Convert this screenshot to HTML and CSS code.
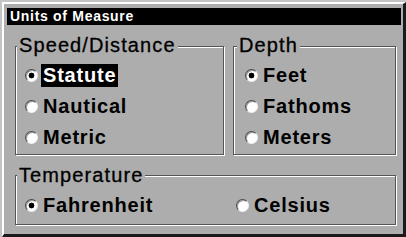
FILE: index.html
```html
<!DOCTYPE html>
<html lang="en">
<head>
    <meta charset="UTF-8">
    <title>Units of Measure</title>
    <link rel="stylesheet" href="styles.css">
</head>
<body>
    <div class="frame">
        <div class="title-bar">Units of Measure</div>

        <div class="groups">
            <div class="group speed">
                <span class="group-title">Speed/Distance</span>
                <div class="option"><span class="radio checked"></span><span class="label selected">Statute</span></div>
                <div class="option"><span class="radio"></span><span class="label">Nautical</span></div>
                <div class="option"><span class="radio"></span><span class="label">Metric</span></div>
            </div>

            <div class="group depth">
                <span class="group-title">Depth</span>
                <div class="option"><span class="radio checked"></span><span class="label">Feet</span></div>
                <div class="option"><span class="radio"></span><span class="label">Fathoms</span></div>
                <div class="option"><span class="radio"></span><span class="label">Meters</span></div>
            </div>
        </div>

        <div class="group temperature">
            <span class="group-title">Temperature</span>
            <div class="option-row">
                <div class="option"><span class="radio checked"></span><span class="label">Fahrenheit</span></div>
                <div class="option"><span class="radio"></span><span class="label">Celsius</span></div>
            </div>
        </div>
    </div>
</body>
</html>
```
FILE: styles.css
```css
body {
    margin: 0;
    background-color: #c4c4c4;
    font-family: "Liberation Sans", Arial, sans-serif;
    color: #000;
}

.frame {
    margin: 2px 0 0 2px;
    width: 404px;
    height: 235px;
    box-sizing: border-box;
    background-color: #adadad;
    border-top: 2px solid #fff;
    border-left: 2px solid #fff;
    border-right: 3px solid #1a1a1a;
    border-bottom: 3px solid #1a1a1a;
}

.title-bar {
    margin: 4px 2px 0 3px;
    height: 17px;
    line-height: 17px;
    padding-left: 3px;
    background-color: #000;
    color: #fff;
    font-size: 14px;
    font-weight: bold;
    letter-spacing: 0.7px;
}

.groups {
    display: flex;
    gap: 9px;
    margin: 21px 0 0 11px;
}

.group {
    box-sizing: border-box;
    border: 1px solid #555;
    box-shadow: inset 1px 1px #fff, 1px 1px #fff;
}

.speed {
    width: 209px;
    height: 109px;
    padding-left: 9px;
}

.depth {
    width: 163px;
    height: 109px;
    padding-left: 11px;
}

.temperature {
    width: 381px;
    height: 50px;
    margin: 20px 0 0 11px;
    padding-left: 9px;
}

.group-title {
    display: table;
    margin: -13px 0 0 -8px;
    padding: 0 2px;
    background-color: #adadad;
    font-size: 20px;
    line-height: 23px;
    letter-spacing: 1.1px;
    -webkit-text-stroke: 0.3px #000;
}

.temperature .group-title {
    margin-top: -12px;
}

.option {
    display: flex;
    align-items: center;
    margin-top: 8px;
    height: 23px;
}

.group-title + .option {
    margin-top: 7px;
}

.option-row {
    display: grid;
    grid-template-columns: 211px auto;
    margin-top: 7px;
}

.option-row .option {
    margin-top: 0;
}

.radio {
    width: 13px;
    height: 13px;
    box-sizing: border-box;
    border-radius: 50%;
    background-color: #fff;
    border: 1px solid;
    border-color: #4a4a4a #f0f0f0 #f0f0f0 #4a4a4a;
    box-shadow: inset 1px 1px #9a9a9a;
    margin-right: 3px;
}

.radio.checked {
    background: radial-gradient(circle, #000 0 2.6px, #fff 3.2px);
}

.label {
    padding: 0 2px;
    font-size: 20px;
    font-weight: bold;
    line-height: 23px;
    letter-spacing: 0.8px;
}

.label.selected {
    background-color: #000;
    color: #fff;
}
```
